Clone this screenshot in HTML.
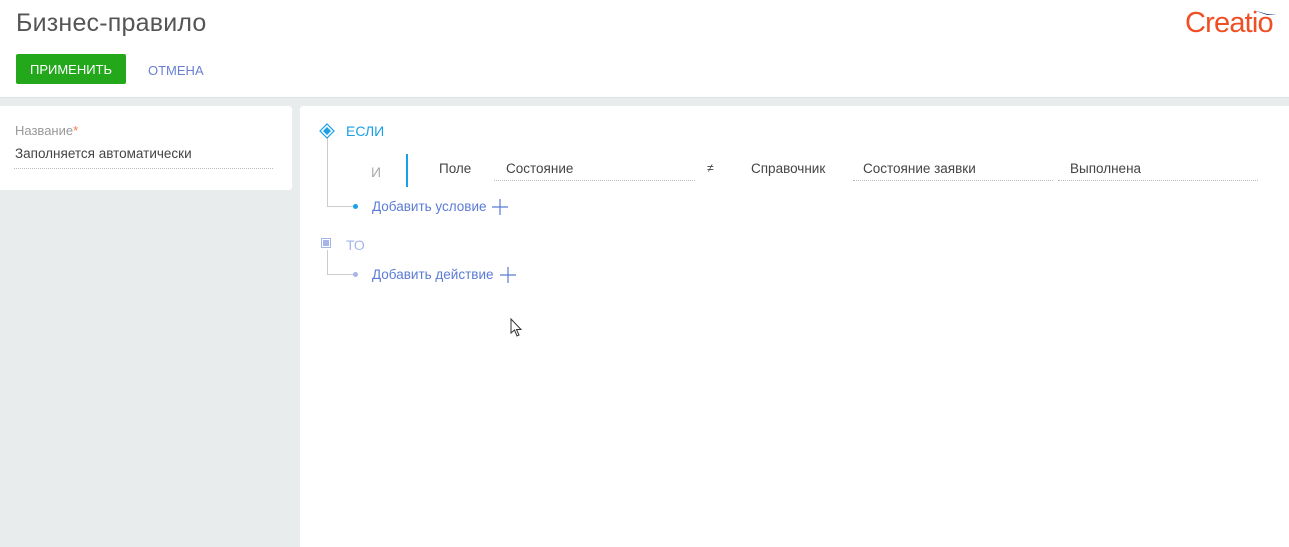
<html><head><style>
body{margin:0;width:1289px;height:547px;background:#e9eced;font-family:"Liberation Sans",sans-serif;position:relative;overflow:hidden;color:#444}
.a{position:absolute;white-space:nowrap}
.u{position:absolute;border-bottom:1px dotted #bbb}
</style></head><body>
<div class="a" style="left:0;top:0;width:1289px;height:97px;background:#fff;border-bottom:1px solid #dfe2e4"></div>
<div class="a" style="left:16px;top:9px;font-size:25px;color:#555;letter-spacing:0.2px">Бизнес-правило</div>
<div class="a" style="left:16px;top:54px;width:110px;height:30px;background:#23a81c;border-radius:2px;color:#fff;font-size:13px;line-height:31px;text-align:center">ПРИМЕНИТЬ</div>
<div class="a" style="left:148px;top:63px;font-size:13px;color:#6a7fd3">ОТМЕНА</div>
<div class="a" style="left:1185px;top:7px;font-size:29px;color:#f04e23;letter-spacing:-0.8px">Creatio</div>
<svg class="a" style="left:1243px;top:9px" width="36" height="10"><path d="M10 1 L24 6 L34 6 L24 5Z" fill="#2a4f8f"/></svg>
<div class="a" style="left:0;top:106px;width:292px;height:84px;background:#fff;border-radius:0 3px 3px 0"></div>
<div class="a" style="left:15px;top:123px;font-size:13px;color:#999">Название<span style="color:#f47b4a">*</span></div>
<div class="a" style="left:15px;top:146px;font-size:13.5px;color:#444">Заполняется автоматически</div>
<div class="u" style="left:14px;top:168px;width:259px"></div>
<div class="a" style="left:300px;top:106px;width:989px;height:441px;background:#fff;border-radius:3px 0 0 0"></div>
<div class="a" style="left:327px;top:136px;width:1px;height:70px;background:#ccc"></div>
<div class="a" style="left:327px;top:206px;width:27px;height:1px;background:#ccc"></div>
<div class="a" style="left:327px;top:250px;width:1px;height:25px;background:#ccc"></div>
<div class="a" style="left:327px;top:274px;width:27px;height:1px;background:#ccc"></div>
<svg class="a" style="left:319px;top:123px" width="16" height="16"><path d="M8 1L15 8L8 15L1 8Z" fill="#fff" stroke="#1aa0e6" stroke-width="1.2"/><path d="M8 4L12 8L8 12L4 8Z" fill="#1aa0e6"/></svg>
<div class="a" style="left:346px;top:123px;font-size:14px;color:#1aa0e6">ЕСЛИ</div>
<div class="a" style="left:371px;top:164px;font-size:14px;color:#aaa">И</div>
<div class="a" style="left:406px;top:154px;width:2px;height:33px;background:#1aa0e6"></div>
<div class="a" style="left:439px;top:161px;font-size:13.5px;color:#444">Поле</div>
<div class="a" style="left:506px;top:161px;font-size:13.5px;color:#444">Состояние</div>
<div class="u" style="left:494px;top:180px;width:201px"></div>
<div class="a" style="left:707px;top:161px;font-size:12px;color:#444">≠</div>
<div class="a" style="left:751px;top:161px;font-size:13.5px;color:#444">Справочник</div>
<div class="a" style="left:863px;top:161px;font-size:13.5px;color:#444">Состояние заявки</div>
<div class="u" style="left:853px;top:180px;width:200px"></div>
<div class="a" style="left:1070px;top:161px;font-size:13.5px;color:#444">Выполнена</div>
<div class="u" style="left:1058px;top:180px;width:200px"></div>
<div class="a" style="left:353px;top:204px;width:5px;height:5px;border-radius:50%;background:#1aa0e6"></div>
<div class="a" style="left:372px;top:199px;font-size:13.5px;color:#5b7bd5">Добавить условие</div>
<svg class="a" style="left:492px;top:199px" width="16" height="16"><path d="M8 0V16M0 8H16" stroke="#5b7bd5" stroke-width="1.2"/></svg>
<div class="a" style="left:321px;top:238px;width:10px;height:10px;border:1px solid #a7b6e8;box-sizing:border-box;background:#fff"></div>
<div class="a" style="left:323px;top:240px;width:6px;height:6px;background:#a7b6e8"></div>
<div class="a" style="left:346px;top:237px;font-size:14px;color:#a7b6e8">ТО</div>
<div class="a" style="left:353px;top:272px;width:5px;height:5px;border-radius:50%;background:#a7b6e8"></div>
<div class="a" style="left:372px;top:267px;font-size:13.5px;color:#5b7bd5">Добавить действие</div>
<svg class="a" style="left:500px;top:267px" width="16" height="16"><path d="M8 0V16M0 8H16" stroke="#5b7bd5" stroke-width="1.2"/></svg>
<svg class="a" style="left:510px;top:318px" width="14" height="20"><path d="M1 1V15L4.5 12L7 18L9 17L6.5 11.5L11 11.5Z" fill="#fff" stroke="#333"/></svg>
</body></html>
